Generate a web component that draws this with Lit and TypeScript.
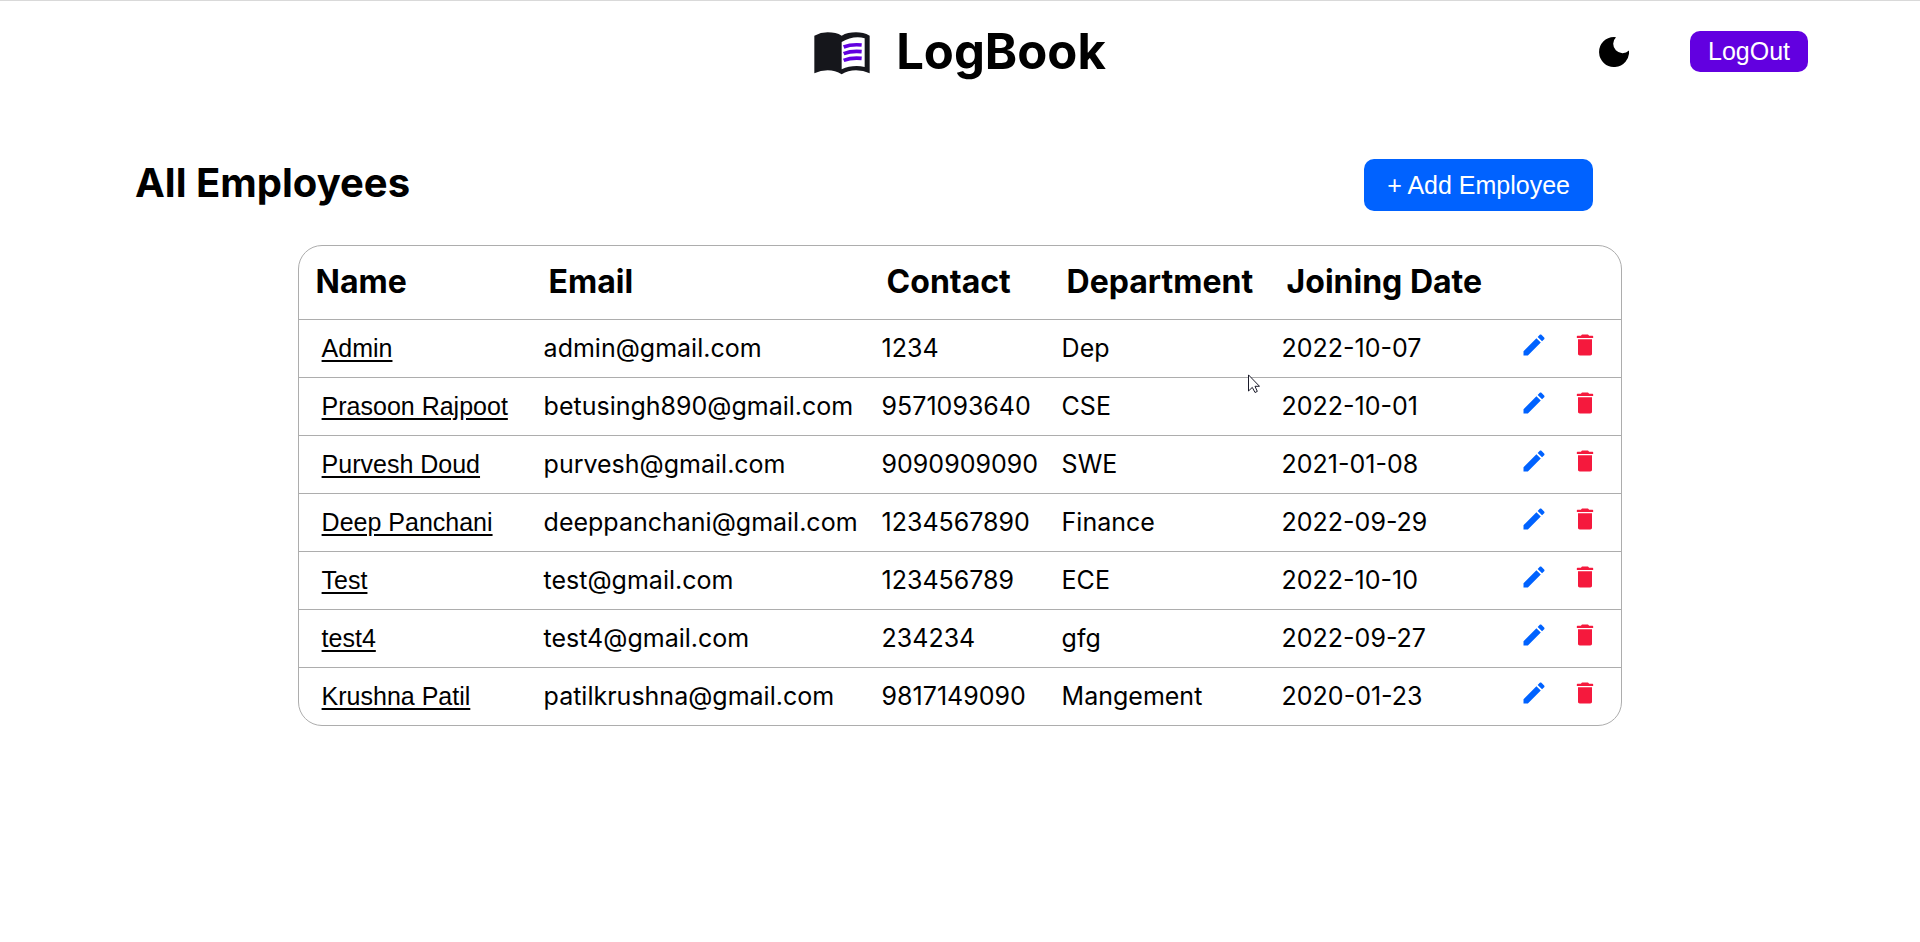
import { LitElement, html, css, svg } from "lit";
import { customElement, state } from "lit/decorators.js";

interface Employee {
  name: string;
  email: string;
  contact: string;
  department: string;
  joined: string;
}

const EMPLOYEES: Employee[] = [
  { name: "Admin", email: "admin@gmail.com", contact: "1234", department: "Dep", joined: "2022-10-07" },
  { name: "Prasoon Rajpoot", email: "betusingh890@gmail.com", contact: "9571093640", department: "CSE", joined: "2022-10-01" },
  { name: "Purvesh Doud", email: "purvesh@gmail.com", contact: "9090909090", department: "SWE", joined: "2021-01-08" },
  { name: "Deep Panchani", email: "deeppanchani@gmail.com", contact: "1234567890", department: "Finance", joined: "2022-09-29" },
  { name: "Test", email: "test@gmail.com", contact: "123456789", department: "ECE", joined: "2022-10-10" },
  { name: "test4", email: "test4@gmail.com", contact: "234234", department: "gfg", joined: "2022-09-27" },
  { name: "Krushna Patil", email: "patilkrushna@gmail.com", contact: "9817149090", department: "Mangement", joined: "2020-01-23" },
];

const pencil = svg`<path d="M3 17.25V21h3.75L17.81 9.94l-3.75-3.75L3 17.25zM20.71 7.04c.39-.39.39-1.02 0-1.41l-2.34-2.34c-.39-.39-1.02-.39-1.41 0l-1.83 1.83 3.75 3.75 1.83-1.83z"/>`;
const trash = svg`<path d="M6 19.600c0 .9.6 1.500 1.500 1.500h9c.9 0 1.500-.6 1.500-1.500V7H6v12.600zM18.500 4h-3l-.7-.7c-.2-.2-.4-.3-.7-.3H9.900c-.3 0-.5.1-.7.3L8.500 4h-3c-.3 0-.5.2-.5.5V6h14V4.500c0-.3-.2-.5-.5-.5z"/>`;

@customElement("app-header")
class AppHeader extends LitElement {
  static styles = css`
    :host {
      display: block;
    }
    .bar {
      display: grid;
      grid-template-columns: 1fr auto 1fr;
      align-items: center;
      height: 102px;
      padding: 0 112px;
      border-top: 1px solid #d9d9d9;
      box-sizing: border-box;
    }
    .brand {
      grid-column: 2;
      display: flex;
      align-items: center;
      gap: 26px;
      font: 700 49px/60px Inter, sans-serif;
      color: #000;
      text-decoration: none;
    }
    .logo {
      width: 56px;
      height: 43px;
      display: block;
      margin-top: 4px;
    }
    .actions {
      display: flex;
      justify-content: flex-end;
      align-items: center;
      gap: 61px;
    }
    .theme {
      border: 0;
      padding: 0;
      background: none;
      display: flex;
      cursor: pointer;
    }
    .moon {
      width: 30px;
      height: 30px;
    }
    .logout {
      border: 0;
      border-radius: 10px;
      padding: 6px 18px;
      background: #6200e0;
      color: #fff;
      font: 25px/29px "Liberation Sans", Arial, sans-serif;
      cursor: pointer;
    }
  `;

  render() {
    return html`
      <header class="bar">
        <a class="brand" href="#">
          <svg class="logo" viewBox="0 0 168 129" aria-hidden="true">
            <path fill="#15161b" d="M1 11Q20 1 41 1Q66 1 83 11Q101 1 126 1Q148 1 167 11V124Q148 115 126 115Q102 115 83 127Q64 115 41 115Q20 115 1 124Z"/>
            <path fill="#fff" d="M83 30Q106 16 131 16Q142 16 152 19V105Q140 102 128 102Q104 102 83 112Z"/>
            <path fill="none" stroke="#6200e0" stroke-width="11" d="M89 45Q112 36 143 39M89 65Q112 56 143 59M89 85Q112 76 143 79"/>
          </svg>
          <span>LogBook</span>
        </a>
        <div class="actions">
          <button class="theme" aria-label="Toggle dark mode">
            <svg class="moon" viewBox="0 0 30 30"><path d="M15 0A15 15 0 1 0 30 13.500A9 9 0 1 1 17 0.200Q16 0 15 0Z"/></svg>
          </button>
          <button class="logout">LogOut</button>
        </div>
      </header>
    `;
  }
}

@customElement("employee-table")
class EmployeeTable extends LitElement {
  @state() rows: Employee[] = EMPLOYEES;

  static styles = css`
    :host {
      display: block;
    }
    .frame {
      border: 1px solid #adadad;
      border-radius: 24px;
      overflow: hidden;
    }
    .grid {
      width: 100%;
      border-collapse: collapse;
      table-layout: fixed;
      font: 400 25px/30px Inter, sans-serif;
      color: #000;
    }
    .name { width: 235px; }
    .email { width: 338px; }
    .contact { width: 180px; }
    .department { width: 220px; }
    .joined { width: 240px; }
    .head {
      height: 73px;
      padding: 0 15px;
      box-sizing: border-box;
      text-align: left;
      font-size: 32px;
      font-weight: 700;
      white-space: nowrap;
    }
    .head.name {
      padding-left: 17px;
    }
    .cell {
      height: 58px;
      padding: 0 10px;
      box-sizing: border-box;
      border-top: 1px solid #adadad;
      white-space: nowrap;
    }
    .cell.name {
      padding-left: 23px;
    }
    .link {
      color: #000;
      font-family: "Liberation Sans", Arial, sans-serif;
      text-underline-offset: 3px;
    }
    .cell.actions {
      padding-left: 8px;
    }
    .tools {
      display: flex;
      gap: 23px;
      padding-bottom: 6px;
    }
    .tool {
      display: flex;
      border: 0;
      padding: 0;
      background: none;
      cursor: pointer;
    }
    .icon {
      width: 28px;
      height: 28px;
    }
    .edit { fill: #0062ff; }
    .delete { fill: #f5193d; }
  `;

  render() {
    return html`
      <div class="frame">
        <table class="grid">
          <thead>
            <tr>
              <th class="head name" scope="col">Name</th>
              <th class="head email" scope="col">Email</th>
              <th class="head contact" scope="col">Contact</th>
              <th class="head department" scope="col">Department</th>
              <th class="head joined" scope="col">Joining Date</th>
              <td class="head"></td>
            </tr>
          </thead>
          <tbody>
            ${this.rows.map(
              (row) => html`
                <tr>
                  <td class="cell name"><a class="link" href="#">${row.name}</a></td>
                  <td class="cell">${row.email}</td>
                  <td class="cell">${row.contact}</td>
                  <td class="cell">${row.department}</td>
                  <td class="cell">${row.joined}</td>
                  <td class="cell actions">
                    <div class="tools">
                      <button class="tool" aria-label="Edit ${row.name}">
                        <svg class="icon edit" viewBox="0 0 24 24">${pencil}</svg>
                      </button>
                      <button class="tool" aria-label="Delete ${row.name}">
                        <svg class="icon delete" viewBox="0 0 24 24">${trash}</svg>
                      </button>
                    </div>
                  </td>
                </tr>
              `
            )}
          </tbody>
        </table>
      </div>
    `;
  }
}

@customElement("app-root")
class AppRoot extends LitElement {
  static styles = css`
    :host {
      display: block;
      position: relative;
      min-height: 100vh;
      background: #fff;
    }
    .titlebar {
      display: flex;
      justify-content: space-between;
      align-items: center;
      margin-top: 57px;
      padding: 0 327px 0 135px;
    }
    .title {
      margin: 0;
      padding-bottom: 4px;
      font: 700 40px/48px Inter, sans-serif;
      color: #000;
    }
    .add {
      border: 0;
      border-radius: 10px;
      padding: 12px 23px 11px;
      background: #0062ff;
      color: #fff;
      font: 25px/29px "Liberation Sans", Arial, sans-serif;
      cursor: pointer;
    }
    .list {
      margin: 34px auto 0;
      width: 69%;
    }
    .pointer {
      position: absolute;
      left: 1248px;
      top: 374px;
      width: 12px;
      height: 19px;
      pointer-events: none;
    }
  `;

  render() {
    return html`
      <app-header></app-header>
      <main>
        <div class="titlebar">
          <h1 class="title">All Employees</h1>
          <button class="add">+ Add Employee</button>
        </div>
        <employee-table class="list"></employee-table>
      </main>
      <svg class="pointer" viewBox="0 0 12 19" aria-hidden="true">
        <path fill="#fff" stroke="#1b1b2a" d="M.5 .9V17L4.300 13.400L7 18.500L9.300 17.400L7 12.300H11.500Z"/>
      </svg>
    `;
  }
}
